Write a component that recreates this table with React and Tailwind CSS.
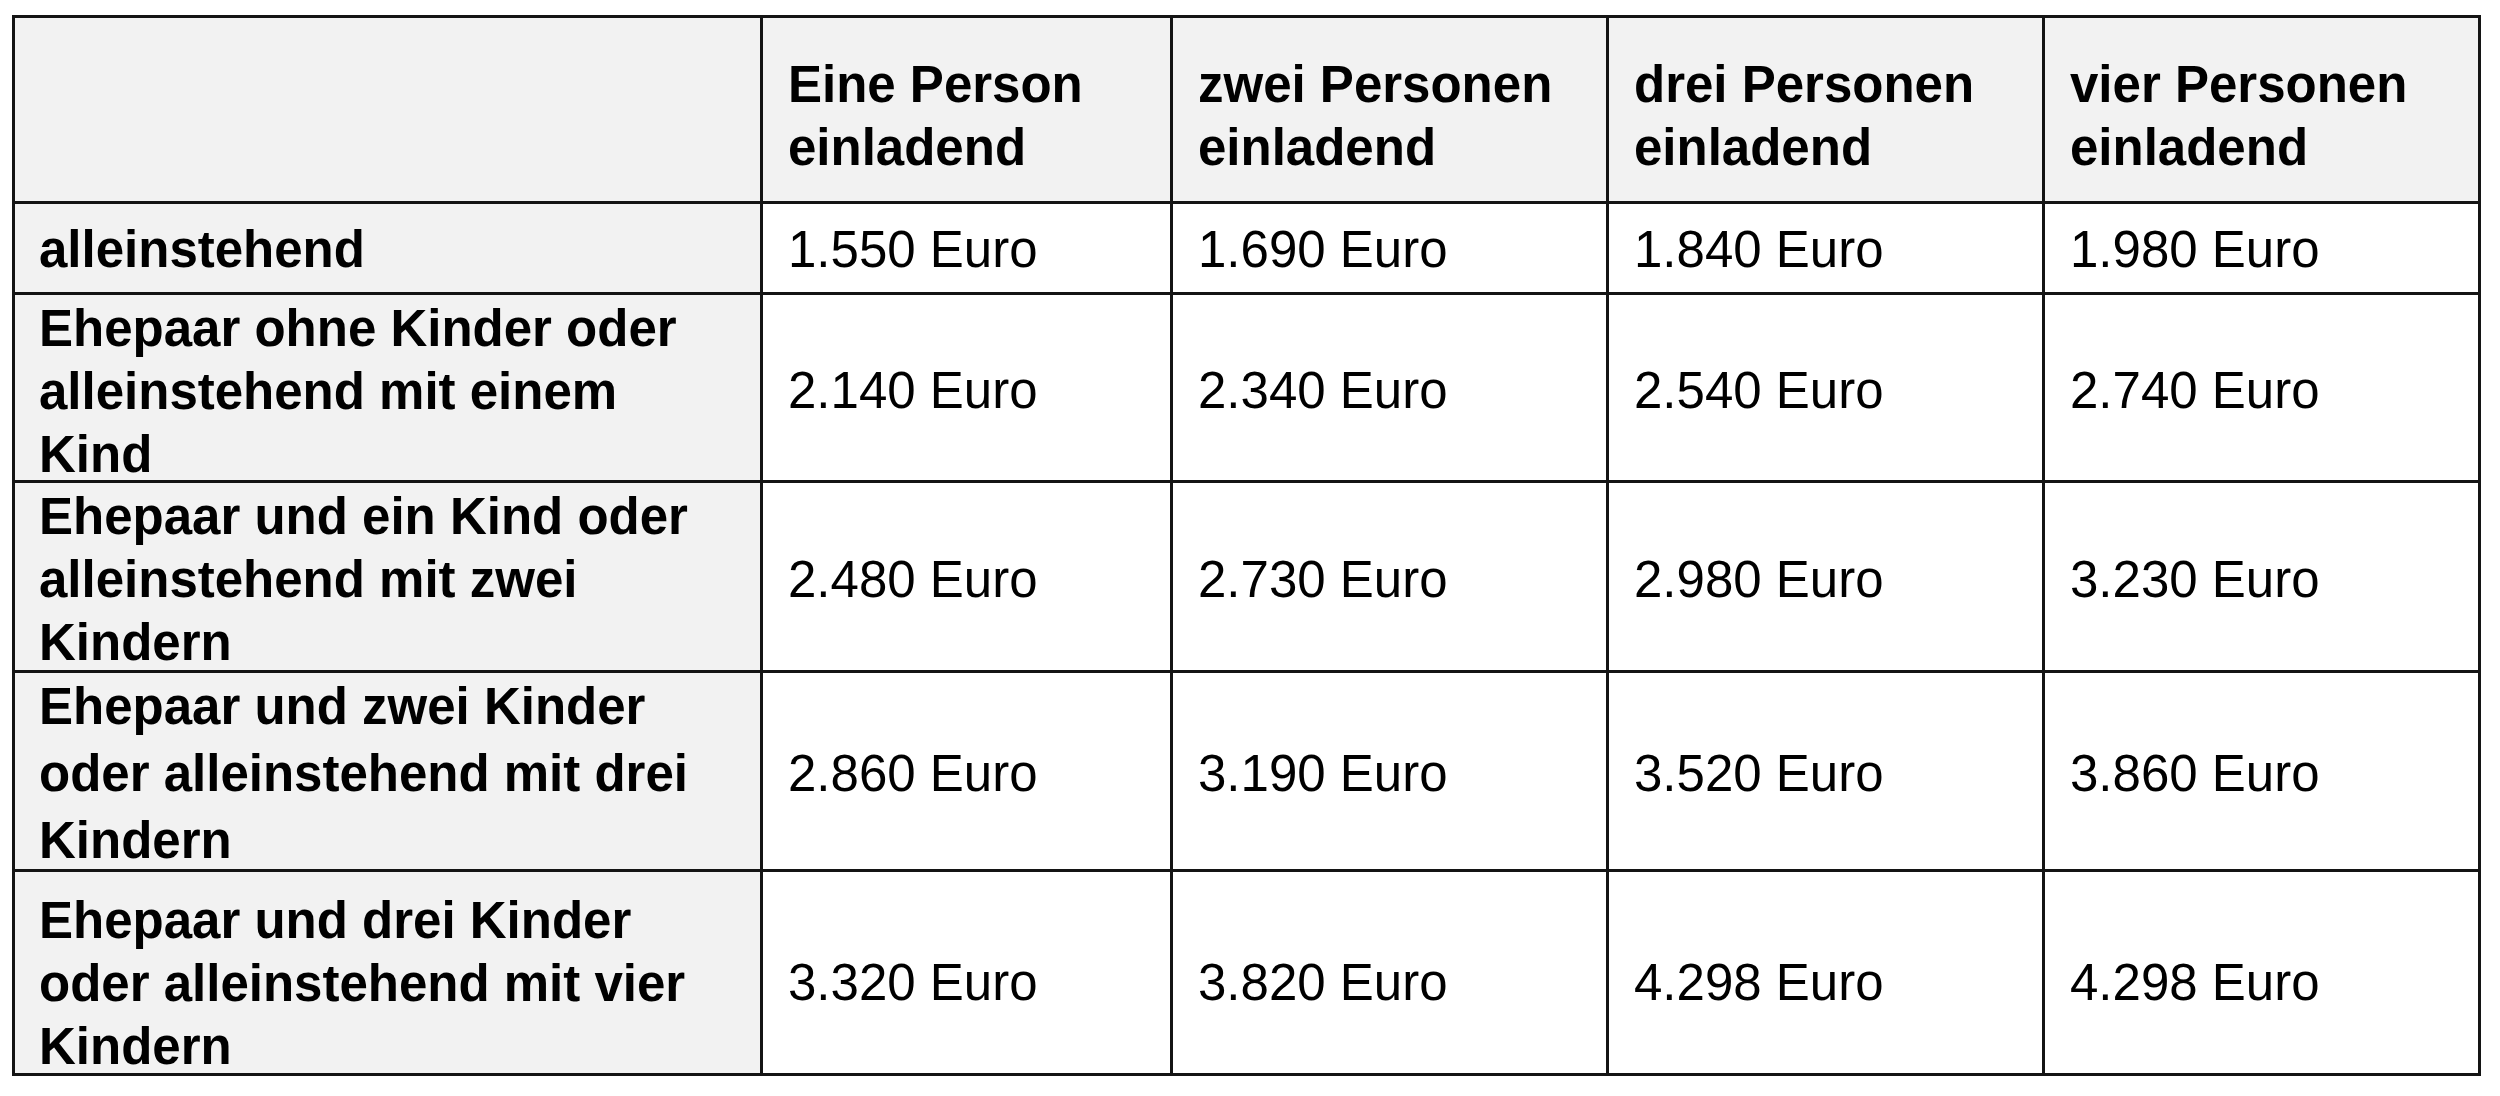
import React from "react";

const headers = [
  ["Eine Person", "einladend"],
  ["zwei Personen", "einladend"],
  ["drei Personen", "einladend"],
  ["vier Personen", "einladend"],
];

const rows = [
  { h: "h-[91px]", lh: "leading-[62px]", pad: "pt-[4px]", label: ["alleinstehend"], vals: ["1.550 Euro", "1.690 Euro", "1.840 Euro", "1.980 Euro"] },
  { h: "h-[188px]", lh: "leading-[63px]", pad: "pt-[7px]", label: ["Ehepaar ohne Kinder oder", "alleinstehend mit einem", "Kind"], vals: ["2.140 Euro", "2.340 Euro", "2.540 Euro", "2.740 Euro"] },
  { h: "h-[190px]", lh: "leading-[63px]", pad: "pt-[6px]", label: ["Ehepaar und ein Kind oder", "alleinstehend mit zwei", "Kindern"], vals: ["2.480 Euro", "2.730 Euro", "2.980 Euro", "3.230 Euro"] },
  { h: "h-[199px]", lh: "leading-[67px]", pad: "pt-[5px]", label: ["Ehepaar und zwei Kinder", "oder alleinstehend mit drei", "Kindern"], vals: ["2.860 Euro", "3.190 Euro", "3.520 Euro", "3.860 Euro"] },
  { h: "h-[204px]", lh: "leading-[63px]", pad: "pt-[21px]", label: ["Ehepaar und drei Kinder", "oder alleinstehend mit vier", "Kindern"], vals: ["3.320 Euro", "3.820 Euro", "4.298 Euro", "4.298 Euro"] },
];

const widths = ["w-[410px]", "w-[436px]", "w-[436px]", "w-[436px]"];

export default function App() {
  return (
    <div className="w-[2500px] h-[1096px] bg-white text-black overflow-hidden" style={{ fontFamily: '"Liberation Sans", Arial, sans-serif' }}>
      <div className="ml-[12px] mt-[15px] inline-flex flex-col border-l-[3px] border-t-[3px] border-[#141414]">
        {/* header row */}
        <div className="flex h-[186px]">
          <div className="w-[748px] bg-[#f2f2f2] border-r-[3px] border-b-[3px] border-[#141414]" />
          {headers.map((hd, i) => (
            <div key={i} className={`${widths[i]} bg-[#f2f2f2] border-r-[3px] border-b-[3px] border-[#141414] flex items-center pl-[25px] pt-[12px]`}>
              <div className="text-[51px] font-bold leading-[63px] whitespace-nowrap">
                {hd[0]}
                <br />
                {hd[1]}
              </div>
            </div>
          ))}
        </div>
        {rows.map((r, ri) => (
          <div key={ri} className={`flex ${r.h}`}>
            <div className={`w-[748px] bg-[#f2f2f2] border-r-[3px] border-b-[3px] border-[#141414] flex items-center pl-[24px] ${r.pad}`}>
              <div className={`text-[51px] font-bold ${r.lh} whitespace-nowrap`}>
                {r.label.map((l, li) => (
                  <div key={li}>{l}</div>
                ))}
              </div>
            </div>
            {r.vals.map((v, vi) => (
              <div key={vi} className={`${widths[vi]} bg-white border-r-[3px] border-b-[3px] border-[#141414] flex items-center pl-[25px] ${r.pad}`}>
                <span className="text-[51px] leading-[62px] whitespace-nowrap">{v}</span>
              </div>
            ))}
          </div>
        ))}
      </div>
    </div>
  );
}
